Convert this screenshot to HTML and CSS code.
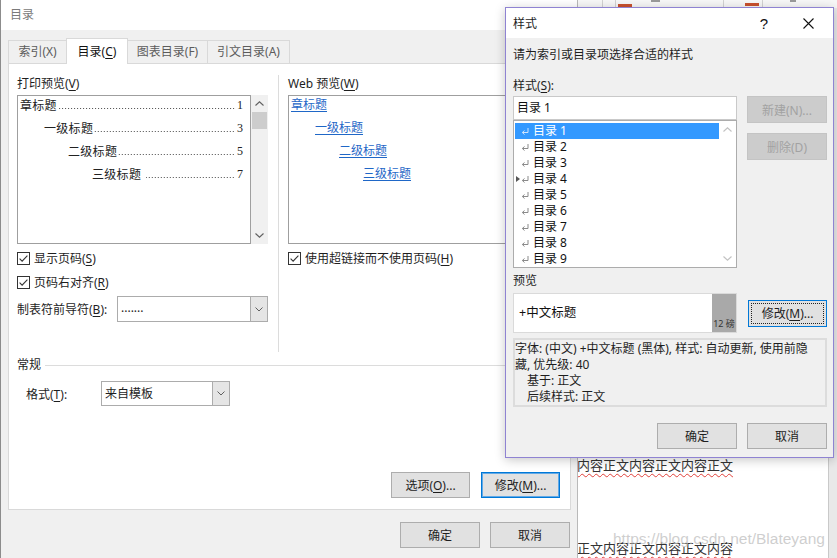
FILE: index.html
```html
<!DOCTYPE html>
<html lang="zh-CN">
<head>
<meta charset="utf-8">
<title>目录</title>
<link rel="stylesheet" href="styles.css">
</head>
<body>
<div class="desktop">
  <div class="ribbon">
    <span class="rb-sep s1"></span>
    <span class="rb-sep s2"></span>
    <span class="rb-red r1"></span>
    <span class="rb-gray g1"></span>
    <span class="rb-sep s3"></span>
    <span class="rb-red r2"></span>
    <span class="rb-sep s4"></span>
    <span class="rb-gray g2"></span>
  </div>

  <div class="doc">
    <p class="doc-line">内容正文内容正文内容正文</p>
    <p class="doc-line second">正文内容正文内容正文内容</p>
    <span class="watermark">https://blog.csdn.net/Blateyang</span>
  </div>

  <div class="dlg main">
    <div class="titlebar">目录</div>
    <div class="tabs">
      <div class="tab w1">索引(X)</div>
      <div class="tab w2 active">目录(<u>C</u>)</div>
      <div class="tab w3">图表目录(F)</div>
      <div class="tab w4">引文目录(A)</div>
    </div>
    <div class="panel">
      <div class="cols">
        <div class="col left">
          <div class="label">打印预览(<u>V</u>)</div>
          <div class="pp-row">
            <div class="pp-box">
              <div class="toc lv1"><span class="name">章标题</span><span class="dots"></span><span class="pg">1</span></div>
              <div class="toc lv2"><span class="name">一级标题</span><span class="dots"></span><span class="pg">3</span></div>
              <div class="toc lv3"><span class="name">二级标题</span><span class="dots"></span><span class="pg">5</span></div>
              <div class="toc lv4"><span class="name">三级标题</span><span class="dots gap"></span><span class="pg">7</span></div>
            </div>
            <div class="vscroll">
              <div class="arr"><svg width="9" height="5" viewBox="0 0 9 5"><path d="M0.5 4.5 L4.5 0.8 L8.5 4.5" fill="none" stroke="#606060" stroke-width="1.1"/></svg></div>
              <div class="thumb"></div>
              <div class="arr bottom"><svg width="9" height="5" viewBox="0 0 9 5"><path d="M0.5 0.5 L4.5 4.2 L8.5 0.5" fill="none" stroke="#606060" stroke-width="1.1"/></svg></div>
            </div>
          </div>
          <div class="chk first">
            <svg class="box" width="13" height="13" viewBox="0 0 13 13"><rect x="0.5" y="0.5" width="12" height="12" fill="#fff" stroke="#333"/><path d="M2.6 6.6 L5.1 9.1 L10.4 3.6" fill="none" stroke="#333" stroke-width="1.1"/></svg>
            <span>显示页码(<u>S</u>)</span>
          </div>
          <div class="chk second">
            <svg class="box" width="13" height="13" viewBox="0 0 13 13"><rect x="0.5" y="0.5" width="12" height="12" fill="#fff" stroke="#333"/><path d="M2.6 6.6 L5.1 9.1 L10.4 3.6" fill="none" stroke="#333" stroke-width="1.1"/></svg>
            <span>页码右对齐(<u>R</u>)</span>
          </div>
          <div class="leader-row">
            <span class="leader-label">制表符前导符(<u>B</u>):</span>
            <div class="combo leader">
              <span class="val">.......</span>
              <span class="drop"><svg width="8" height="5" viewBox="0 0 8 5"><path d="M0.5 0.5 L4 4 L7.5 0.5" fill="none" stroke="#606060"/></svg></span>
            </div>
          </div>
        </div>
        <div class="vsep"></div>
        <div class="col right">
          <div class="label">Web 预览(<u>W</u>)</div>
          <div class="web-box">
            <a class="wl lv1">章标题</a>
            <a class="wl lv2">一级标题</a>
            <a class="wl lv3">二级标题</a>
            <a class="wl lv4">三级标题</a>
          </div>
          <div class="chk first">
            <svg class="box" width="13" height="13" viewBox="0 0 13 13"><rect x="0.5" y="0.5" width="12" height="12" fill="#fff" stroke="#333"/><path d="M2.6 6.6 L5.1 9.1 L10.4 3.6" fill="none" stroke="#333" stroke-width="1.1"/></svg>
            <span>使用超链接而不使用页码(<u>H</u>)</span>
          </div>
        </div>
      </div>
      <div class="group-title">常规</div>
      <div class="fmt-row">
        <span class="fmt-label">格式(<u>T</u>):</span>
        <div class="combo fmt">
          <span class="val">来自模板</span>
          <span class="drop"><svg width="8" height="5" viewBox="0 0 8 5"><path d="M0.5 0.5 L4 4 L7.5 0.5" fill="none" stroke="#606060"/></svg></span>
        </div>
      </div>
      <div class="panel-btns">
        <div class="btn w79">选项(<u>O</u>)...</div>
        <div class="btn w79 default">修改(<u>M</u>)...</div>
      </div>
    </div>
    <div class="dlg-btns">
      <div class="btn w80">确定</div>
      <div class="btn w80">取消</div>
    </div>
  </div>

  <div class="dlg sdlg">
    <div class="s-title">
      <span class="s-name">样式</span>
      <span class="help">?</span>
      <span class="close"><svg width="11" height="11" viewBox="0 0 11 11"><path d="M0.5 0.5 L10.5 10.5 M10.5 0.5 L0.5 10.5" stroke="#111" stroke-width="1.1"/></svg></span>
    </div>
    <div class="s-body">
      <div class="prompt">请为索引或目录项选择合适的样式</div>
      <div class="s-label">样式(<u>S</u>):</div>
      <div class="s-grid">
        <div class="s-left">
          <div class="s-input">目录 1</div>
          <div class="s-list">
            <div class="rows">
              <div class="row sel"><span class="tri"></span><span class="ret"><svg width="8" height="7" viewBox="0 0 8 7"><path d="M7 0 V4.5 H1.5 M3.5 2.5 L1.3 4.5 L3.5 6.5" fill="none" stroke="#cfe3fb"/></svg></span><span class="txt">目录 1</span></div>
              <div class="row"><span class="tri"></span><span class="ret"><svg width="8" height="7" viewBox="0 0 8 7"><path d="M7 0 V4.5 H1.5 M3.5 2.5 L1.3 4.5 L3.5 6.5" fill="none" stroke="#8a8a8a"/></svg></span><span class="txt">目录 2</span></div>
              <div class="row"><span class="tri"></span><span class="ret"><svg width="8" height="7" viewBox="0 0 8 7"><path d="M7 0 V4.5 H1.5 M3.5 2.5 L1.3 4.5 L3.5 6.5" fill="none" stroke="#8a8a8a"/></svg></span><span class="txt">目录 3</span></div>
              <div class="row"><span class="tri"><svg width="4" height="6" viewBox="0 0 4 6"><path d="M0 0 L4 3 L0 6 Z" fill="#555"/></svg></span><span class="ret"><svg width="8" height="7" viewBox="0 0 8 7"><path d="M7 0 V4.5 H1.5 M3.5 2.5 L1.3 4.5 L3.5 6.5" fill="none" stroke="#8a8a8a"/></svg></span><span class="txt">目录 4</span></div>
              <div class="row"><span class="tri"></span><span class="ret"><svg width="8" height="7" viewBox="0 0 8 7"><path d="M7 0 V4.5 H1.5 M3.5 2.5 L1.3 4.5 L3.5 6.5" fill="none" stroke="#8a8a8a"/></svg></span><span class="txt">目录 5</span></div>
              <div class="row"><span class="tri"></span><span class="ret"><svg width="8" height="7" viewBox="0 0 8 7"><path d="M7 0 V4.5 H1.5 M3.5 2.5 L1.3 4.5 L3.5 6.5" fill="none" stroke="#8a8a8a"/></svg></span><span class="txt">目录 6</span></div>
              <div class="row"><span class="tri"></span><span class="ret"><svg width="8" height="7" viewBox="0 0 8 7"><path d="M7 0 V4.5 H1.5 M3.5 2.5 L1.3 4.5 L3.5 6.5" fill="none" stroke="#8a8a8a"/></svg></span><span class="txt">目录 7</span></div>
              <div class="row"><span class="tri"></span><span class="ret"><svg width="8" height="7" viewBox="0 0 8 7"><path d="M7 0 V4.5 H1.5 M3.5 2.5 L1.3 4.5 L3.5 6.5" fill="none" stroke="#8a8a8a"/></svg></span><span class="txt">目录 8</span></div>
              <div class="row"><span class="tri"></span><span class="ret"><svg width="8" height="7" viewBox="0 0 8 7"><path d="M7 0 V4.5 H1.5 M3.5 2.5 L1.3 4.5 L3.5 6.5" fill="none" stroke="#8a8a8a"/></svg></span><span class="txt">目录 9</span></div>
            </div>
            <div class="lscroll">
              <div class="arr"><svg width="9" height="5" viewBox="0 0 9 5"><path d="M0.5 4.5 L4.5 0.8 L8.5 4.5" fill="none" stroke="#c2c2c2" stroke-width="1.1"/></svg></div>
              <div class="arr bottom"><svg width="9" height="5" viewBox="0 0 9 5"><path d="M0.5 0.5 L4.5 4.2 L8.5 0.5" fill="none" stroke="#c2c2c2" stroke-width="1.1"/></svg></div>
            </div>
          </div>
        </div>
        <div class="s-right">
          <div class="btn disabled">新建(N)...</div>
          <div class="btn disabled del">删除(D)</div>
        </div>
      </div>
      <div class="s-label preview-label">预览</div>
      <div class="pv-row">
        <div class="pv-box">
          <span class="pv-text">+中文标题</span>
          <span class="pv-size">12 磅</span>
        </div>
        <div class="btn w79 focus">修改(<u>M</u>)...</div>
      </div>
      <div class="desc">
        <div class="dl">字体: (中文) +中文标题 (黑体), 样式: 自动更新, 使用前隐</div>
        <div class="dl">藏, 优先级: 40</div>
        <div class="dl ind">基于: 正文</div>
        <div class="dl ind">后续样式: 正文</div>
      </div>
      <div class="s-btns">
        <div class="btn w80">确定</div>
        <div class="btn w80">取消</div>
      </div>
    </div>
  </div>
</div>
</body>
</html>
```

FILE: styles.css
```css
* { box-sizing: border-box; margin: 0; padding: 0; }
html, body { width: 837px; height: 558px; overflow: hidden; }
body {
  font-family: "Noto Sans", "Noto Sans CJK SC", sans-serif;
  font-size: 12px;
  color: #1e1e1e;
  background: #e9e9e9;
}
u { text-decoration: underline; text-underline-offset: 2px; }

.desktop { position: relative; width: 837px; height: 558px; overflow: hidden; background: #e9e9e9; }

/* ribbon strip at the top right */
.ribbon { position: absolute; left: 577px; top: 0; width: 260px; height: 8px; background: #f7f7f7; }
.rb-sep { position: absolute; top: 0; width: 1px; height: 8px; background: #d2d2d2; }
.rb-sep.s1 { left: 25px; }
.rb-sep.s2 { left: 38px; }
.rb-sep.s3 { left: 146px; }
.rb-sep.s4 { left: 185px; }
.rb-red { position: absolute; top: 4px; width: 14px; height: 3px; background: #c9512e; }
.rb-red.r1 { left: 41px; }
.rb-red.r2 { left: 168px; top: 3px; }
.rb-gray { position: absolute; top: 0; width: 9px; height: 2px; background: #9a9a9a; }
.rb-gray.g1 { left: 74px; }
.rb-gray.g2 { left: 213px; width: 6px; }

/* word document behind */
.doc {
  position: absolute; left: 577px; top: 8px; width: 252px; height: 550px;
  background: #fff; border-right: 1px solid #c9c9c9;
  padding-top: 448px;
  font-family: "Noto Sans CJK SC", sans-serif;
  font-size: 13px; color: #333;
}
.doc-line {
  line-height: 18px; white-space: nowrap;
  text-decoration: underline wavy #e0403a; text-decoration-thickness: 1px; text-underline-offset: 3px;
}
.doc-line.second { margin-top: 65px; }
.watermark {
  position: absolute; left: 36px; top: 522px;
  font-family: "Liberation Sans", sans-serif; font-size: 15.5px; line-height: 18px;
  color: rgba(190, 190, 190, 0.75); white-space: nowrap;
}

/* main dialog */
.main {
  position: absolute; left: 0; top: 0; width: 578px; height: 558px;
  background: #f0f0f0; border-left: 1px solid #8c8c8c; border-right: 1px solid #b9b9b9;
  display: flex; flex-direction: column;
}
.titlebar { height: 30px; flex: none; background: #fff; padding-left: 9px; line-height: 30px; color: #7a7a7a; }
.tabs {
  display: flex; align-items: flex-end; height: 26px; flex: none;
  margin-top: 8px; margin-bottom: -1px; padding-left: 7px;
  position: relative; z-index: 1;
}
.tab {
  height: 23px; margin-bottom: 1px; margin-right: -1px;
  border: 1px solid #d9d9d9; border-bottom: none; background: #f0f0f0;
  color: #5c5c5c; text-align: center; line-height: 22px;
}
.tab.w1 { width: 59px; }
.tab.w2 { width: 62px; }
.tab.w3 { width: 81px; }
.tab.w4 { width: 83px; }
.tab.active {
  height: 26px; margin-bottom: 0; background: #fff; color: #111;
  line-height: 25px; position: relative; z-index: 2;
}

.panel {
  margin-left: 7px; width: 563px; height: 447px; flex: none;
  background: #fff; border: 1px solid #d9d9d9;
  display: flex; flex-direction: column;
  padding: 0 10px 11px 8px;
}
.cols { display: flex; height: 288px; flex: none; }
.col.left { width: 251px; }
.col.right { flex: 1; }
.vsep { width: 1px; background: #dcdcdc; margin: 11px 9px 0 10px; }
.label { margin-top: 12px; line-height: 16px; height: 16px; white-space: nowrap; }

.pp-row { display: flex; margin-top: 3px; height: 149px; }
.pp-box {
  width: 234px; height: 149px; border: 1px solid #9f9f9f; background: #fff;
  padding: 0 7px 0 2px;
  font-family: "Liberation Serif", "Noto Sans CJK SC", serif; font-size: 12px; color: #222;
}
.toc { display: flex; height: 18px; line-height: 18px; margin-bottom: 5px; white-space: nowrap; }
.toc.lv2 { padding-left: 24px; }
.toc.lv3 { padding-left: 48px; }
.toc.lv4 { padding-left: 72px; }
.toc .name { font-family: "Noto Sans CJK SC", sans-serif; letter-spacing: 0.3px; }
.toc .dots {
  flex: 1; margin-left: 1px; margin-right: 1px;
  background-image: radial-gradient(circle, #4a4a4a 0.6px, rgba(74, 74, 74, 0) 1px);
  background-size: 3px 3px;
  background-repeat: repeat-x;
  background-position: right 0 top 11px;
}
.toc .dots.gap { margin-left: 5px; }
.toc .pg { padding-left: 1px; }

.vscroll { width: 17px; height: 149px; background: #f0f0f0; display: flex; flex-direction: column; }
.arr { height: 17px; display: flex; align-items: center; justify-content: center; flex: none; }
.arr.bottom { margin-top: auto; }
.thumb { height: 17px; margin: 0 1px; background: #cdcdcd; flex: none; }

.chk { display: flex; align-items: center; height: 14px; gap: 4px; white-space: nowrap; }
.chk.first { margin-top: 7px; }
.chk.second { margin-top: 10px; }
.chk .box { flex: none; }

.leader-row { display: flex; align-items: center; margin-top: 7px; height: 26px; }
.leader-label { width: 100px; white-space: nowrap; }
.combo { display: flex; border: 1px solid #acacac; background: #fff; }
.combo .val { flex: 1; padding-left: 3px; white-space: nowrap; }
.combo .drop {
  width: 17px; background: #e5e5e5; border-left: 1px solid #acacac;
  display: flex; align-items: center; justify-content: center;
}
.combo.leader { width: 151px; height: 26px; line-height: 22px; }
.combo.fmt { width: 129px; height: 25px; line-height: 23px; }

.web-box {
  margin-top: 3px; height: 149px; border: 1px solid #9f9f9f; border-right: none; background: #fff;
  padding-left: 2px; display: flex; flex-direction: column; align-items: flex-start;
}
.wl {
  height: 18px; line-height: 18px; margin-bottom: 5px;
  color: #1f67c7; text-decoration: underline; text-underline-offset: 2px; white-space: nowrap;
}
.wl.lv2 { margin-left: 24px; }
.wl.lv3 { margin-left: 48px; }
.wl.lv4 { margin-left: 72px; }

.group-title { display: flex; align-items: center; margin-top: 5px; line-height: 16px; height: 16px; }
.group-title::after { content: ""; flex: 1; height: 1px; background: #dcdcdc; margin-left: 4px; }
.fmt-row { display: flex; align-items: center; margin-top: 8px; padding-left: 9px; height: 25px; }
.fmt-label { width: 75px; white-space: nowrap; }

.btn {
  height: 26px; border: 1px solid #adadad; background: #e1e1e1;
  display: flex; align-items: center; justify-content: center;
  color: #1e1e1e; white-space: nowrap; flex: none;
}
.btn.w79 { width: 79px; }
.btn.w80 { width: 80px; }
.btn.default { border-color: #0078d7; box-shadow: inset 0 0 0 1px #62a9e6; }
.btn.focus { border-color: #0078d7; outline: 1px dotted #222; outline-offset: -4px; height: 27px; }
.btn.disabled { width: 80px; height: 27px; background: #cccccc; border-color: #c4c4c4; color: #a2a2a2; }
.panel-btns { margin-top: auto; display: flex; justify-content: flex-end; gap: 11px; }
.dlg-btns { margin-top: 12px; display: flex; justify-content: flex-end; gap: 10px; padding-right: 7px; }

/* style dialog */
.sdlg {
  position: absolute; left: 505px; top: 7px; width: 329px; height: 451px;
  border: 1px solid #8f83d2; background: #f0f0f0;
  box-shadow: 0 2px 10px rgba(0, 0, 0, 0.22);
  display: flex; flex-direction: column; z-index: 5;
}
.s-title { height: 30px; flex: none; background: #fff; display: flex; align-items: center; }
.s-name { padding-left: 7px; }
.help {
  margin-left: auto; width: 38px; margin-right: 2px; text-align: center;
  font-family: "Liberation Sans", sans-serif; font-size: 15px; color: #111;
}
.close { width: 46px; margin-right: 2px; display: flex; justify-content: center; }
.s-body { flex: 1; padding: 0 6px 0 7px; display: flex; flex-direction: column; }
.prompt { margin-top: 9px; line-height: 16px; white-space: nowrap; }
.s-label { margin-top: 15px; line-height: 16px; height: 16px; }
.s-grid { display: grid; grid-template-columns: 224px 80px; column-gap: 10px; margin-top: 2px; }
.s-input {
  height: 24px; border: 1px solid #c9c9c9; background: #fff;
  padding-left: 3px; line-height: 22px; font-size: 12px; color: #111;
}
.s-list { display: flex; height: 148px; border: 1px solid #acacac; background: #fff; padding: 2px 0 0 1px; }
.rows { width: 204px; flex: none; }
.row { display: flex; align-items: center; height: 16px; padding-left: 1px; font-size: 12px; color: #111; overflow: hidden; }
.row.sel { background: #3399ff; color: #fff; }
.tri { width: 5px; height: 16px; display: flex; align-items: center; flex: none; }
.ret { width: 12px; height: 16px; display: flex; align-items: center; flex: none; }
.txt { line-height: 16px; white-space: nowrap; }
.lscroll { width: 17px; margin-top: -2px; display: flex; flex-direction: column; background: #fff; }
.s-right { display: flex; flex-direction: column; }
.btn.del { margin-top: 10px; }

.preview-label { margin-top: 5px; }
.pv-row { display: flex; align-items: center; gap: 11px; margin-top: 4px; height: 40px; }
.pv-box {
  width: 224px; height: 40px; border: 1px solid #dadada; background: #fff;
  display: flex;
}
.pv-text { flex: 1; padding-left: 5px; line-height: 38px; font-size: 12.5px; color: #111; }
.pv-size {
  width: 24px; background: #a9a9a9; font-size: 9px; line-height: 11px; color: #333;
  display: flex; align-items: flex-end; justify-content: center; padding-bottom: 3px; white-space: nowrap;
}
.desc {
  margin-top: 5px; height: 69px; border: 2px solid #dcdcdc; background: #f0f0f0;
  padding-top: 1px; white-space: nowrap;
}
.dl { line-height: 16px; }
.dl.ind { padding-left: 12px; }
.s-btns { margin-top: 16px; display: flex; justify-content: flex-end; gap: 10px; }
```
